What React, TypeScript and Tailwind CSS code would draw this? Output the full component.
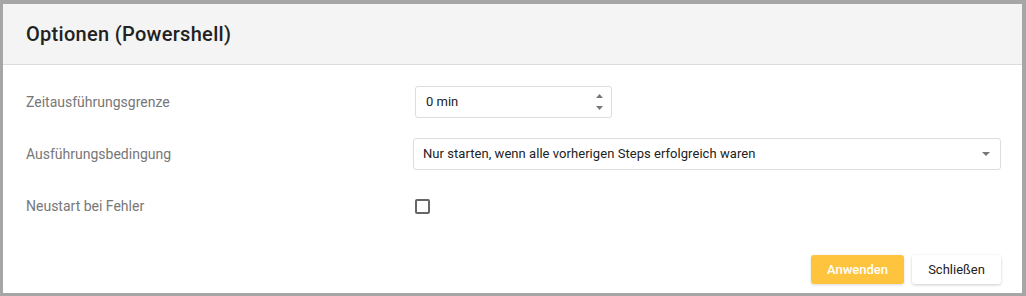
export default function App() {
  return (
    <div
      className="w-[1026px] h-[296px] bg-[#a6a6a6] pt-[4px] pl-[3px] pr-[4px] pb-[3px]"
      style={{ fontFamily: 'Roboto, "Liberation Sans", sans-serif' }}
    >
      <div className="flex h-full flex-col bg-white">
        <div className="flex h-[61px] items-center border-b border-[#dcdcdc] bg-[#f4f4f4] pl-[23px]">
          <h1 className="text-[20px] font-medium tracking-[0.3px] text-[#222]">Optionen (Powershell)</h1>
        </div>

        <div className="flex flex-col pl-[23px] pt-[21px]">
          <div className="flex h-[32px] items-center">
            <span className="w-[389px] text-[14px] text-[#777]">Zeitausführungsgrenze</span>
            <div className="flex h-[32px] w-[197px] items-center justify-between rounded-[3px] border border-[#ddd] pl-[10px] pr-[8px]">
              <span className="text-[13px] text-[#222]">0 min</span>
              <div className="flex flex-col gap-[8px]">
                <svg width="7" height="4" viewBox="0 0 7 4"><path d="M3.5 0 L7 4 L0 4 Z" fill="#777" /></svg>
                <svg width="7" height="4" viewBox="0 0 7 4"><path d="M0 0 L7 0 L3.5 4 Z" fill="#777" /></svg>
              </div>
            </div>
          </div>

          <div className="mt-[20px] flex h-[32px] items-center">
            <span className="w-[387px] text-[14px] text-[#777]">Ausführungsbedingung</span>
            <div className="flex h-[32px] w-[588px] items-center justify-between rounded-[3px] border border-[#ddd] pl-[9px] pr-[10px]">
              <span className="text-[13px] tracking-[0.05px] text-[#222]">Nur starten, wenn alle vorherigen Steps erfolgreich waren</span>
              <svg width="8" height="4" viewBox="0 0 8 4"><path d="M0 0 L8 0 L4 4 Z" fill="#777" /></svg>
            </div>
          </div>

          <div className="mt-[20px] flex h-[32px] items-center">
            <span className="w-[389px] text-[14px] text-[#777]">Neustart bei Fehler</span>
            <div className="h-[15px] w-[15px] rounded-[2px] border-2 border-[#666]" />
          </div>
        </div>

        <div className="mt-auto flex justify-end gap-[8px] pb-[9px] pr-[21px]">
          <button className="h-[29px] w-[93px] rounded-[3px] bg-[#ffc43d] text-[13px] font-medium text-white shadow-[0_1px_3px_rgba(0,0,0,0.15)]">
            Anwenden
          </button>
          <button className="h-[29px] w-[89px] rounded-[3px] bg-white text-[13px] text-[#222] shadow-[0_1px_3px_rgba(0,0,0,0.2)]">
            Schließen
          </button>
        </div>
      </div>
    </div>
  );
}
